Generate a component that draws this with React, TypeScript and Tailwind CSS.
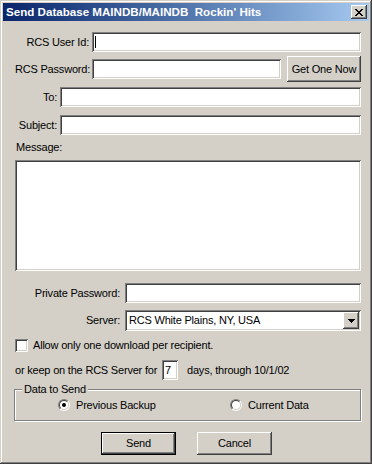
import React from "react";

const sunken =
  "bg-white shadow-[inset_1px_1px_0_#808080,inset_-1px_-1px_0_#ffffff,inset_2px_2px_0_#404040,inset_-2px_-2px_0_#d4d0c8]";
const raised =
  "bg-[#d4d0c8] shadow-[inset_-1px_-1px_0_#404040,inset_1px_1px_0_#ffffff,inset_-2px_-2px_0_#808080]";

const xPixels = [
  "xx....xx",
  ".xx..xx.",
  "..xxxx..",
  "...xx...",
  "..xxxx..",
  ".xx..xx.",
  "xx....xx",
];

function CloseGlyph() {
  const rects: React.ReactNode[] = [];
  xPixels.forEach((row, y) =>
    row.split("").forEach((c, x) => {
      if (c === "x") rects.push(<rect key={`${x}-${y}`} x={x} y={y} width={1} height={1} fill="#000" />);
    })
  );
  return (
    <svg width="8" height="7" viewBox="0 0 8 7" shapeRendering="crispEdges">
      {rects}
    </svg>
  );
}

function Radio({ checked }: { checked?: boolean }) {
  return (
    <div className="shrink-0 w-[12px] h-[12px] rounded-full border border-t-[#808080] border-l-[#808080] border-b-white border-r-white">
      <div className="w-full h-full rounded-full border border-t-[#404040] border-l-[#404040] border-b-[#d4d0c8] border-r-[#d4d0c8] bg-white flex items-center justify-center">
        {checked && <div className="w-[4px] h-[4px] rounded-full bg-black" />}
      </div>
    </div>
  );
}

export default function App() {
  return (
    <div className="w-[372px] h-[464px] bg-[#d4d0c8] flex flex-col font-['Liberation_Sans',Arial,sans-serif] text-[11px] text-black tracking-[-0.2px] whitespace-nowrap shadow-[inset_-1px_-1px_0_#404040,inset_1px_1px_0_#d4d0c8,inset_-2px_-2px_0_#808080,inset_2px_2px_0_#ffffff]">
      {/* Title bar */}
      <div className="mx-[3px] mt-[3px] h-[18px] flex items-center bg-linear-to-r from-[#0a246a] to-[#a6caf0]">
        <span className="pl-[3px] text-white font-bold text-[11.6px] tracking-normal whitespace-pre leading-none">
          Send Database MAINDB/MAINDB  Rockin' Hits
        </span>
        <div className={`ml-auto mr-[2px] w-[16px] h-[14px] flex items-center justify-center ${raised}`}>
          <CloseGlyph />
        </div>
      </div>

      <div className="pl-[15px] pr-[11px] flex flex-col">
        {/* RCS User Id */}
        <div className="mt-[11px] h-[20px] flex items-center">
          <div className="shrink-0 w-[77px] pr-[3px] text-right">RCS User Id:</div>
          <div className={`flex-1 h-full relative ${sunken}`}>
            <div className="absolute left-[3px] top-[4px] w-[1px] h-[12px] bg-black" />
          </div>
        </div>

        {/* RCS Password */}
        <div className="mt-[4px] h-[26px] flex items-center">
          <div className="shrink-0 w-[77px] pr-[3px] text-right">RCS Password:</div>
          <div className={`shrink-0 w-[189px] h-[20px] ${sunken}`} />
          <div className={`ml-auto shrink-0 w-[74px] h-[26px] flex items-center justify-center ${raised}`}>Get One Now</div>
        </div>

        {/* To */}
        <div className="mt-[5px] h-[20px] flex items-center">
          <div className="shrink-0 w-[45px] pr-[3px] text-right">To:</div>
          <div className={`flex-1 h-full ${sunken}`} />
        </div>

        {/* Subject */}
        <div className="mt-[8px] h-[20px] flex items-center">
          <div className="shrink-0 w-[45px] pr-[3px] text-right">Subject:</div>
          <div className={`flex-1 h-full ${sunken}`} />
        </div>

        {/* Message */}
        <div className="mt-[5px] h-[14px] leading-[14px] pl-[1px]">Message:</div>
        <div className={`mt-[6px] h-[111px] ${sunken}`} />

        {/* Private Password */}
        <div className="mt-[12px] h-[20px] flex items-center">
          <div className="shrink-0 w-[110px] pr-[5px] text-right">Private Password:</div>
          <div className={`flex-1 h-full ${sunken}`} />
        </div>

        {/* Server */}
        <div className="mt-[7px] h-[21px] flex items-center">
          <div className="shrink-0 w-[110px] pr-[5px] text-right">Server:</div>
          <div className={`flex-1 h-full flex items-center pl-[4px] pr-[2px] ${sunken}`}>
            <span>RCS White Plains, NY, USA</span>
            <div className={`ml-auto w-[16px] h-[17px] flex items-center justify-center ${raised}`}>
              <svg width="7" height="4" viewBox="0 0 7 4" shapeRendering="crispEdges">
                <path d="M0 0h7v1h-1v1h-1v1h-1v1h-1v-1h-1v-1h-1v-1h-1z" fill="#000" />
              </svg>
            </div>
          </div>
        </div>

        {/* Checkbox */}
        <div className="mt-[8px] h-[13px] flex items-center">
          <div className={`shrink-0 w-[13px] h-[13px] ${sunken}`} />
          <span className="ml-[5px]">Allow only one download per recipient.</span>
        </div>

        {/* Keep on server */}
        <div className="mt-[8px] h-[20px] flex items-center">
          <span className="shrink-0 w-[147px]">or keep on the RCS Server for</span>
          <div className={`shrink-0 w-[16px] h-[20px] flex items-center pl-[3px] ${sunken}`}>
            <span>7</span>
          </div>
          <span className="ml-[9px]">days, through 10/1/02</span>
        </div>

        {/* Group box */}
        <div className="mt-[9px] -ml-[1px] h-[32px] relative border border-[#808080] shadow-[1px_1px_0_#ffffff,inset_1px_1px_0_#ffffff] flex items-center">
          <div className="absolute left-[7px] top-[-8px] px-[2px] bg-[#d4d0c8] leading-[14px]">Data to Send</div>
          <div className="ml-[43px] w-[172px] flex items-center">
            <Radio checked />
            <span className="ml-[6px]">Previous Backup</span>
          </div>
          <div className="flex items-center">
            <Radio />
            <span className="ml-[6px]">Current Data</span>
          </div>
        </div>

        {/* Buttons */}
        <div className="mt-[11px] h-[23px] flex items-center pl-[86px]">
          <div className="w-[75px] h-[23px] border border-black">
            <div className={`w-full h-full flex items-center justify-center ${raised}`}>Send</div>
          </div>
          <div className={`ml-[21px] w-[75px] h-[23px] flex items-center justify-center ${raised}`}>Cancel</div>
        </div>
      </div>
    </div>
  );
}
